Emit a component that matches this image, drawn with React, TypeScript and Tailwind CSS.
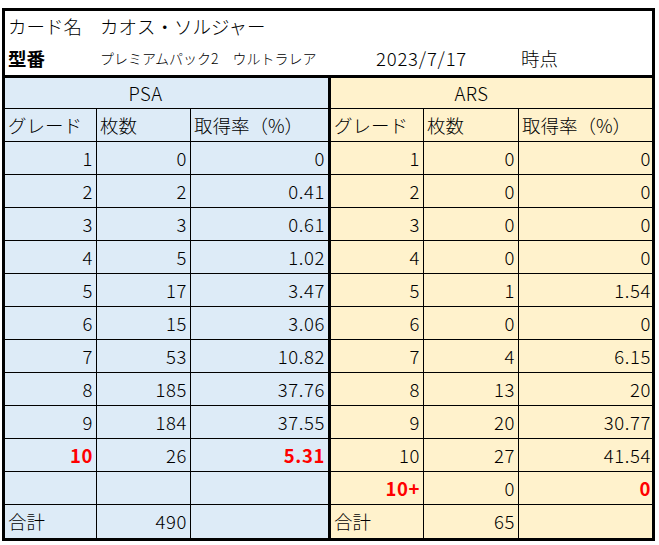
type Cell = { text: string; red?: boolean; left?: boolean };

const psaRows: Cell[][] = [
  [{ text: '1' }, { text: '0' }, { text: '0' }],
  [{ text: '2' }, { text: '2' }, { text: '0.41' }],
  [{ text: '3' }, { text: '3' }, { text: '0.61' }],
  [{ text: '4' }, { text: '5' }, { text: '1.02' }],
  [{ text: '5' }, { text: '17' }, { text: '3.47' }],
  [{ text: '6' }, { text: '15' }, { text: '3.06' }],
  [{ text: '7' }, { text: '53' }, { text: '10.82' }],
  [{ text: '8' }, { text: '185' }, { text: '37.76' }],
  [{ text: '9' }, { text: '184' }, { text: '37.55' }],
  [{ text: '10', red: true }, { text: '26' }, { text: '5.31', red: true }],
  [{ text: '' }, { text: '' }, { text: '' }],
  [{ text: '合計', left: true }, { text: '490' }, { text: '' }],
];

const arsRows: Cell[][] = [
  [{ text: '1' }, { text: '0' }, { text: '0' }],
  [{ text: '2' }, { text: '0' }, { text: '0' }],
  [{ text: '3' }, { text: '0' }, { text: '0' }],
  [{ text: '4' }, { text: '0' }, { text: '0' }],
  [{ text: '5' }, { text: '1' }, { text: '1.54' }],
  [{ text: '6' }, { text: '0' }, { text: '0' }],
  [{ text: '7' }, { text: '4' }, { text: '6.15' }],
  [{ text: '8' }, { text: '13' }, { text: '20' }],
  [{ text: '9' }, { text: '20' }, { text: '30.77' }],
  [{ text: '10' }, { text: '27' }, { text: '41.54' }],
  [{ text: '10+', red: true }, { text: '0' }, { text: '0', red: true }],
  [{ text: '合計', left: true }, { text: '65' }, { text: '' }],
];

function Half({
  title,
  rows,
  bg,
  widths,
  titlePad,
  last,
}: {
  title: string;
  rows: Cell[][];
  bg: string;
  widths: string[];
  titlePad: string;
  last?: boolean;
}) {
  const headers = ['グレード', '枚数', '取得率（%）'];
  return (
    <div className={`flex flex-col ${bg} ${last ? 'w-[321px]' : 'w-[326px] border-r-[3px] border-black'}`}>
      <div className={`h-[31px] border-b border-black flex items-center justify-center tracking-[0.5px] ${titlePad}`}>
        {title}
      </div>
      <div className="h-[33px] border-b border-black flex">
        {headers.map((h, i) => (
          <div
            key={i}
            className={`${widths[i]} ${i < 2 ? 'border-r border-black' : ''} flex items-center pl-[3px]`}
          >
            {h}
          </div>
        ))}
      </div>
      {rows.map((row, r) => (
        <div
          key={r}
          className={`h-[33px] flex ${r < rows.length - 1 ? 'border-b border-black' : ''}`}
        >
          {row.map((c, i) => (
            <div
              key={i}
              className={`${widths[i]} ${i < 2 ? 'border-r border-black' : ''} flex items-center ${
                c.left ? 'justify-start pl-[3px]' : `justify-end tracking-[0.6px] ${last && i === 2 ? 'pr-[1px]' : 'pr-[3px]'}`
              } ${c.red ? 'text-[#ff0000] font-bold' : 'font-light'}`}
            >
              {c.text}
            </div>
          ))}
        </div>
      ))}
    </div>
  );
}

export default function App() {
  return (
    <div
      className="bg-white w-[659px] h-[545px] pt-[8px] pl-[2px] text-black text-[18.5px] font-light leading-none"
      style={{ fontFamily: '"Noto Sans CJK JP", "Noto Sans", sans-serif' }}
    >
      <div className="w-[653px] border-[3px] border-black">
        {/* header */}
        <div className="h-[64px] flex flex-col">
          <div className="h-[30px] flex items-center pl-[3px]">
            <span className="w-[92px]">カード名</span>
            <span>カオス・ソルジャー</span>
          </div>
          <div className="h-[34px] flex items-center pl-[3px]">
            <span className="w-[92px] font-bold">型番</span>
            <span className="w-[276px] text-[14px]">プレミアムパック2　ウルトラレア</span>
            <span className="w-[145px] tracking-[0.8px]">2023/7/17</span>
            <span>時点</span>
          </div>
        </div>

        {/* tables */}
        <div className="flex border-t-[3px] border-black">
          <Half
            title="PSA"
            rows={psaRows}
            bg="bg-[#ddebf7]"
            widths={['w-[92px]', 'w-[94px]', 'w-[137px]']}
            titlePad="pr-[42px]"
          />
          <Half
            title="ARS"
            rows={arsRows}
            bg="bg-[#fff2cc]"
            widths={['w-[93px]', 'w-[95px]', 'w-[133px]']}
            titlePad="pr-[40px]"
            last
          />
        </div>
      </div>
    </div>
  );
}
